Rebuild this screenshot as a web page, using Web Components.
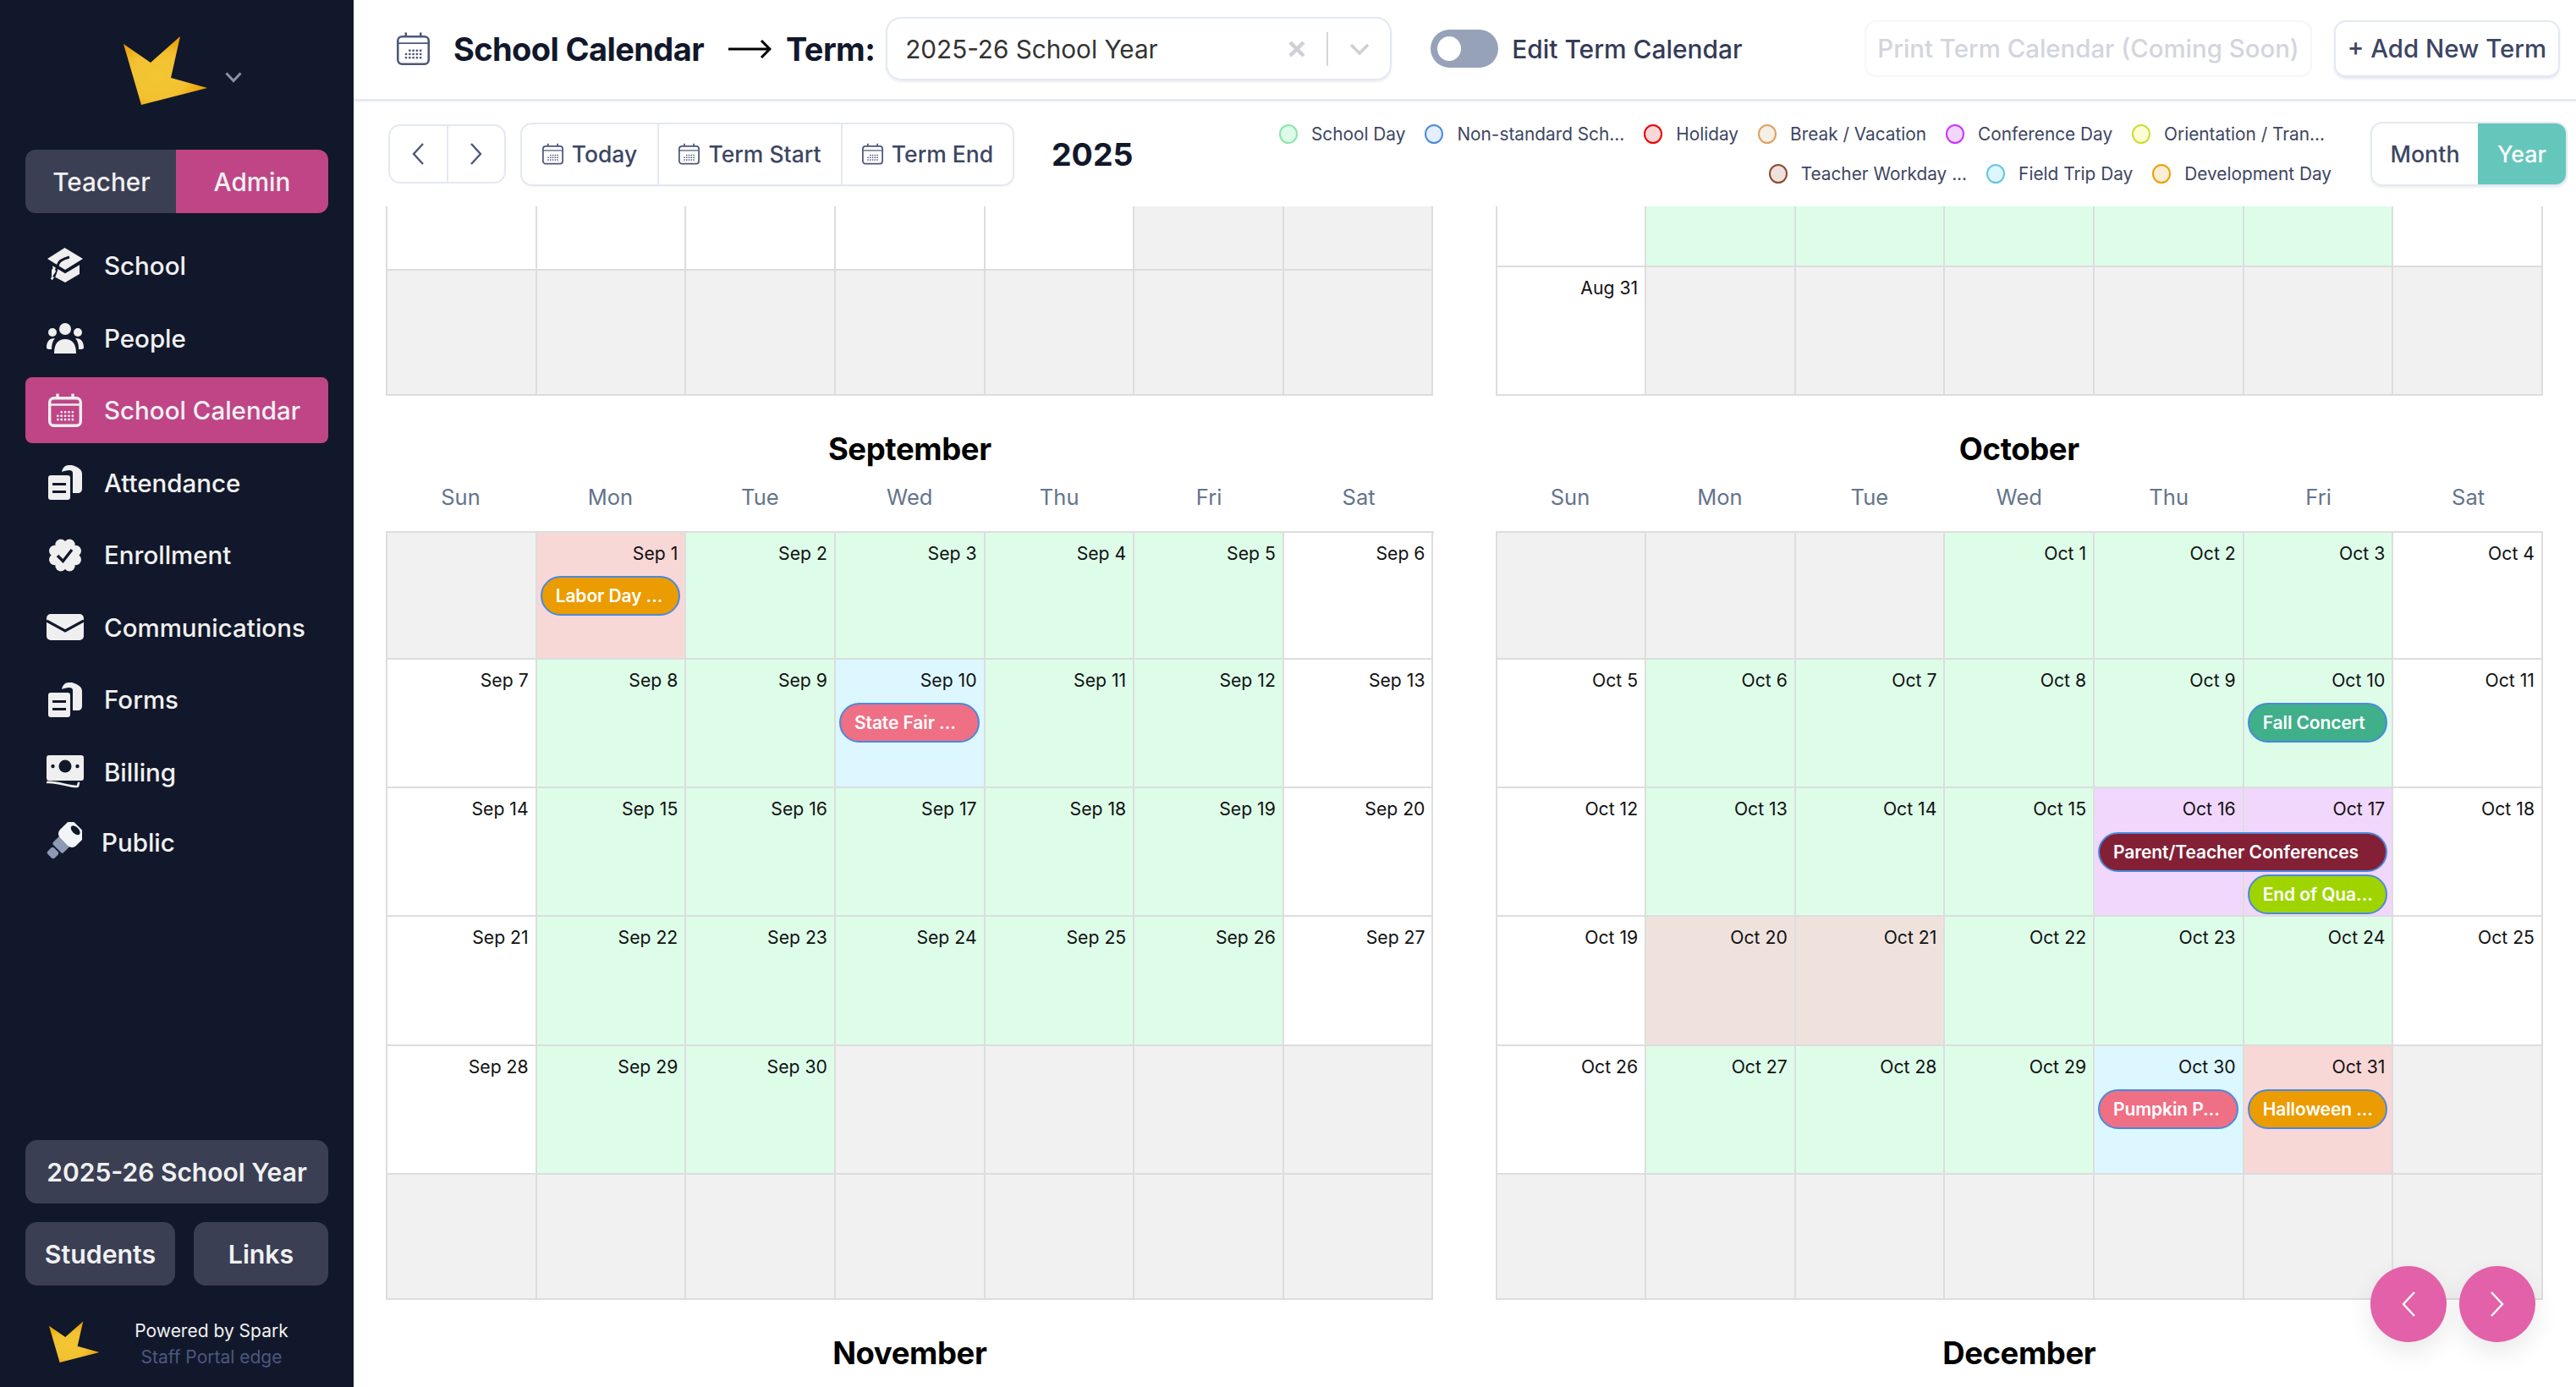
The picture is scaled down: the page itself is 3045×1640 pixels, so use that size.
<!DOCTYPE html>
<html lang="en"><head><meta charset="utf-8"><title>School Calendar</title>
<style>
html,body{margin:0;height:100%;overflow:hidden;background:#fff;font-family:Inter,"Liberation Sans",sans-serif}
</style></head><body>
<school-app></school-app>
<script>
const BG='#12182b';
const star=(id)=>`<svg viewBox="0 0 100 82" width="100%" height="100%" style="display:block"><defs><radialGradient id="${id}" cx="40%" cy="58%" r="62%"><stop offset="0" stop-color="#f3c633"/><stop offset=".55" stop-color="#f2c131"/><stop offset="1" stop-color="#ec9c00"/></radialGradient></defs><polygon points="0,9 32,31 67,0 56,49 99,61 21,81" fill="url(#${id})"/></svg>`;
const calIcon=(c,sw=3)=>{let d='';for(let y=0;y<3;y++)for(let x=0;x<5;x++){if(y==0&&x==0)continue;d+=`<rect x="${10+x*4.4}" y="${21+y*4.4}" width="2.6" height="2.6" rx=".8" fill="${c}"/>`}
 return `<svg viewBox="0 0 40 40" width="100%" height="100%" style="display:block"><rect x="${sw/2}" y="${4+sw/2}" width="${40-sw}" height="${36-sw}" rx="5" fill="none" stroke="${c}" stroke-width="${sw}"/><path d="M11 0.5V6M29 0.5V6" stroke="${c}" stroke-width="${sw}"/><path d="M2 13.5H38" stroke="${c}" stroke-width="${sw*.7}"/>${d}</svg>`};
const I='#efefef';
const scallop=()=>{let s='';for(let k=0;k<8;k++){const t=k*Math.PI/4+Math.PI/8;s+=`<circle cx="${(20+13.5*Math.cos(t)).toFixed(2)}" cy="${(20.5+13.5*Math.sin(t)).toFixed(2)}" r="6.500"/>`}return s};
const icons={
school:`<svg viewBox="0 0 44 42" width="44" height="42"><path fill="${I}" d="M21.5 0 43 13 22 26 1 13Z"/><path fill="${I}" d="M7 21 22 30 39 20V31L22 41 9 34Z"/><path fill="none" stroke="${BG}" stroke-width="3" d="M27 11C20 13 15 15 14 19 12 24 11 29 9 34"/><path fill="none" stroke="${BG}" stroke-width="2" d="M7 20 22 29 39 19"/><path fill="${I}" d="M6 26 9 23 11 28 7 34 9 35 7 38 5 37 6 34Z"/></svg>`,
people:`<svg viewBox="0 0 44 36" width="44" height="36"><g fill="${I}"><circle cx="22" cy="7" r="7"/><circle cx="7" cy="11" r="5"/><circle cx="37" cy="11" r="5"/><path d="M9 36C9 24 14 19 22 19S35 24 35 36C35 38 9 38 9 36Z"/><path d="M0 29C0 21 4 18 10 18 7 21 6 26 6 31 3 31 0 31 0 29Z"/><path d="M44 29C44 21 40 18 34 18 37 21 38 26 38 31 41 31 44 31 44 29Z"/></g></svg>`,
calendar:`<span style="display:block;width:40px;height:40px">${calIcon(I,3.4)}</span>`,
docs:`<svg viewBox="0 0 40 41" width="40" height="41"><g fill="${I}"><path d="M16 8C17 3 20 0 24 0H28C32 1 40 4 40 10V28C40 31 38 33 35 33H29V9C29 7 27 6 25 6 22 6 18 7 16 8Z"/><rect x="0" y="12" width="26" height="29" rx="3"/></g><path stroke="${BG}" stroke-width="3" d="M5 22.5H21M5 31.5H21"/></svg>`,
badge:`<svg viewBox="0 0 40 41" width="40" height="41"><g fill="${I}"><circle cx="20" cy="20.5" r="15"/>${scallop()}</g><path fill="none" stroke="${BG}" stroke-width="3.400" d="M11 21 17.500 27.500 28 14"/></svg>`,
mail:`<svg viewBox="0 0 44 31" width="44" height="31"><rect width="44" height="31" rx="5" fill="${I}"/><path fill="none" stroke="${BG}" stroke-width="3.200" d="M0 8 22 20 44 8"/></svg>`,
bill:`<svg viewBox="0 0 44 39" width="44" height="39"><rect width="44" height="30" rx="3" fill="${I}"/><circle cx="22" cy="13" r="7.500" fill="${BG}"/><circle cx="7.500" cy="13" r="2.200" fill="${BG}"/><circle cx="36.500" cy="13" r="2.200" fill="${BG}"/><path fill="none" stroke="${I}" stroke-width="2.600" stroke-linecap="round" d="M1 32C14 31 24 37 36 37 38 37 37 34 38 33"/></svg>`,
scope:`<svg viewBox="0 0 46 48" width="46" height="48"><g fill="#8e9ab3" transform="rotate(-45 23 24)"><rect x="-1" y="18" width="11" height="12" rx="3"/><rect x="12" y="15" width="14" height="18" rx="2"/></g><g transform="rotate(-45 23 24)"><rect x="24" y="10" width="26" height="28" rx="7" fill="#f2f5f5"/><ellipse cx="44" cy="24" rx="4" ry="7" fill="${BG}"/></g></svg>`};

class Base extends HTMLElement{connectedCallback(){if(this.shadowRoot)return;this.attachShadow({mode:'open'}).innerHTML=this.render()}
 a(n,d=''){return this.getAttribute(n)??d}}
const def=(n,c)=>customElements.define(n,c);

const C={g:'#f1f1f1',w:'#fff',s:'#ddfde9',h:'#f8d7d7',b:'#dcf7ff',c:'#f2d7fd',t:'#efe2dd'};
const O='#ea9c00',P='#ef6f85',M='#832035',L='#9fd400',T='#3fb08a';
const HS=[150,152,152,153,152,148];
const mk=(mon,start,n,marks={},ev={})=>{let d=1-start,rows=[];for(let r=0;r<6;r++){let cells=[];for(let i=0;i<7;i++,d++){if(d<1||d>n)cells.push(['g','']);else{let t=marks[d]||(i==0||i==6?'w':'s');cells.push([t,mon+' '+d])}}rows.push({cells,events:ev[r]||[],h:HS[r]})}return rows};
const blank=(arr)=>arr.split('').map(c=>[c,'']);
const DATA={
 sep:mk('Sep',1,30,{1:'h',10:'b'},{0:[[2,1,'Labor Day ...',O]],1:[[4,1,'State Fair ...',P]]}),
 oct:mk('Oct',3,31,{16:'c',17:'c',20:'t',21:'t',30:'b',31:'h'},{1:[[6,1,'Fall Concert',T]],2:[[5,2,'Parent/Teacher Conferences',M,52],[6,1,'End of Qua...',L,102]],4:[[5,1,'Pumpkin P...',P],[6,1,'Halloween ...',O]]}),
 t1:[{cells:blank('wwwwwgg'),h:76},{cells:blank('ggggggg'),h:148}],
 t2:[{cells:blank('wsssssw'),h:72},{cells:[['w','Aug 31'],...blank('gggggg')],h:152}]
};

def('nav-item',class extends Base{render(){const act=this.hasAttribute('active'),pub=this.a('icon')=='scope';return `<style>
:host{display:flex;align-items:center;height:78px;border-radius:8px;color:#f1f1f1;font-size:29.500px;font-weight:500;background:${act?'#bf4587':'transparent'};padding-left:${pub?23:25}px}
.i{width:44px;height:44px;display:flex;align-items:center;justify-content:center;margin-right:${pub?23:24}px;flex:none}
</style><span class="i">${icons[this.a('icon')]}</span><slot></slot>`}});

def('side-btn',class extends Base{render(){return `<style>
:host{display:flex;align-items:center;justify-content:center;height:75px;border-radius:14px;background:#3a3f54;color:#f1f1f1;font-size:30.300px;font-weight:600}
</style><slot></slot>`}});

def('app-sidebar',class extends Base{render(){return `<style>
:host{display:flex;flex-direction:column;width:418px;flex:none;height:100vh;background:${BG};padding:0 30px;box-sizing:border-box}
.lg{width:358px;display:flex;justify-content:flex-start;height:177px}
.seg{display:flex;height:75px;border-radius:12px;overflow:hidden;color:#f1f1f1;font-size:29.700px;font-weight:500}
.seg span{display:flex;align-items:center;justify-content:center}
.t{width:178px;background:#3a3f54;padding-left:2px;box-sizing:border-box}.d{flex:1;background:#bf4587}
nav{display:flex;flex-direction:column;gap:7.500px;margin-top:23px}
.foot{margin-top:auto;display:flex;flex-direction:column;gap:22px}
.two{display:flex;gap:22px}.two side-btn:first-child{width:177px}.two side-btn:last-child{flex:1}
.pw{display:flex;align-items:center;height:50px;margin-top:20px;margin-bottom:28px;padding-left:28px}
.pw .s{width:60px;height:50px;flex:none}
.tx{width:264px;text-align:center;line-height:31px;font-size:21px;color:#f1f1f1;position:relative;top:2px}
.tx div+div{color:#4c5780}
</style>
<div class="lg"><div style="position:relative;width:100%"><div style="width:100px;height:82px;margin:43px 0 0 116px">${star('a')}</div><svg style="position:absolute;left:236px;top:85px" width="20" height="13" viewBox="0 0 20 13"><path d="M1.500 1.500 10 10.500 18.500 1.500" fill="none" stroke="#8791aa" stroke-width="3"/></svg></div></div>
<div class="seg"><span class="t">Teacher</span><span class="d">Admin</span></div>
<nav><nav-item icon="school">School</nav-item><nav-item icon="people">People</nav-item><nav-item icon="calendar" active>School Calendar</nav-item><nav-item icon="docs">Attendance</nav-item><nav-item icon="badge">Enrollment</nav-item><nav-item icon="mail">Communications</nav-item><nav-item icon="docs">Forms</nav-item><nav-item icon="bill">Billing</nav-item><nav-item icon="scope" style="margin-top:-2px">Public</nav-item></nav>
<div class="foot"><side-btn style="font-size:30px">2025-26 School Year</side-btn><div class="two"><side-btn>Students</side-btn><side-btn>Links</side-btn></div>
<div class="pw"><span class="s">${star('b')}</span><div class="tx"><div>Powered by Spark</div><div>Staff Portal edge</div></div></div></div>`}});

def('top-bar',class extends Base{render(){const ch=`<svg width="24" height="14" viewBox="0 0 24 14"><path d="M2 2 12 12 22 2" fill="none" stroke="#cfd0d6" stroke-width="3.500"/></svg>`;return `<style>
:host{display:flex;align-items:center;border-bottom:3px solid #e4e8f2;padding:0 19px 2px 51px;box-sizing:content-box;flex:none;color:#12182b;height:115px}
h1{font-size:38px;font-weight:700;margin:0 0 0 28px;letter-spacing:-.6px;white-space:nowrap}
.ic{width:39px;height:39px;flex:none}
.arr{margin:0 17px 0 28px;flex:none}
.sel{display:flex;align-items:center;width:598px;height:75px;box-sizing:border-box;border:2px solid #e4e8f2;border-radius:18px;padding-left:21px;margin-left:13px;font-size:29.700px;color:#333;box-shadow:0 2px 3px rgba(30,40,80,.08)}
.sel .v{flex:1}
.x{color:#ccc;margin-right:25px;display:flex}.sep{width:2px;height:40px;background:#d6d6d6;margin-right:25px}
.tg{margin:0 16px 0 46px;width:80px;height:45px;border-radius:23px;background:#96a2b8;flex:none;position:relative}
.tg i{position:absolute;left:8px;top:8px;width:28px;height:29px;border-radius:50%;background:#fff}
.ed{font-size:29.900px;font-weight:500;color:#343b57;white-space:nowrap}
.pr{margin-left:auto;width:529px;height:67px;box-sizing:border-box;border:2px solid #f5f6f9;border-radius:14px;display:flex;align-items:center;justify-content:center;color:#d3d5dd;font-size:29.400px;font-weight:500;white-space:nowrap}
.ad{margin-left:26px;width:267px;height:68px;box-sizing:border-box;border:2px solid #e4e8f2;border-bottom-width:3px;border-radius:14px;display:flex;align-items:center;justify-content:center;color:#3d4663;font-size:29.400px;font-weight:500;white-space:nowrap;box-shadow:0 2px 3px rgba(30,40,80,.08)}
</style><span class="ic">${calIcon('#4d5878',2.6)}</span><h1>School Calendar</h1>
<svg class="arr" width="52" height="24" viewBox="0 0 52 24"><path d="M1 12H50M40 2 50 12 40 22" fill="none" stroke="#000" stroke-width="3"/></svg><h1 style="margin:0">Term:</h1>
<div class="sel"><span class="v">2025-26 School Year</span><span class="x"><svg width="20" height="20" viewBox="0 0 20 20"><path d="M2 2 18 18M18 2 2 18" stroke="#cfd0d6" stroke-width="4.500"/></svg></span><span class="sep"></span>${ch}<span style="width:24px"></span></div>
<span class="tg"><i></i></span><span class="ed">Edit Term Calendar</span>
<span class="pr">Print Term Calendar (Coming Soon)</span><span class="ad">+ Add New Term</span>`}});

def('legend-item',class extends Base{render(){return `<style>
:host{display:inline-flex;align-items:center;font-size:20.800px;color:#3d4663;white-space:nowrap}
i{width:22px;height:23px;box-sizing:border-box;border-radius:50%;border:2.500px solid ${this.a('b')};background:${this.a('f')};margin-right:16px;flex:none}
</style><i></i><slot></slot>`}});

def('cal-toolbar',class extends Base{render(){const chev=d=>`<svg width="16" height="28" viewBox="0 0 16 28"><path d="${d}" fill="none" stroke="#4d5878" stroke-width="2.400"/></svg>`;
const b=(t,w)=>`<span class="b" style="width:${w}px"><span class="k">${calIcon('#4d5878',2.8)}</span>${t}</span>`;return `<style>
:host{display:flex;align-items:center;height:124px;padding:0 10px 0 41px;flex:none;position:relative}
.nav{display:flex;width:139px;height:70px;box-sizing:border-box;border:2px solid #e4e8f2;border-radius:14px;flex:none}
.nav span{flex:1;display:flex;align-items:center;justify-content:center}.nav span+span{border-left:2px solid #e4e8f2}
.grp{display:flex;height:75px;box-sizing:border-box;border:2px solid #e4e8f2;border-radius:14px;margin-left:17px;flex:none;box-shadow:0 1px 2px rgba(30,40,80,.06)}
.b{display:flex;align-items:center;justify-content:center;font-size:26.500px;font-weight:500;color:#3d4663;box-sizing:border-box}
.b+.b{border-left:2px solid #e4e8f2}
.k{width:25px;height:26px;margin-right:10px}
.y{font-size:37.500px;font-weight:700;color:#12182b;margin-left:44px}
.lg{margin-left:auto;display:flex;flex-direction:column;gap:23px;align-items:flex-end;margin-top:0}
.r{display:flex;gap:23px;height:24px;align-items:center}.r1{margin-right:8px}
.mt{display:flex;width:233px;height:76px;box-sizing:border-box;border:2px solid #e4e8f2;border-radius:14px;overflow:hidden;margin-left:46px;flex:none;font-size:26.800px;font-weight:500;box-shadow:0 2px 3px rgba(30,40,80,.08)}
.mt span{display:flex;align-items:center;justify-content:center}
.m{width:125px;color:#3d4663}.yr{flex:1;background:#65c6bb;color:#fff}
</style><span class="nav"><span>${chev('M14 2 3 14 14 26')}</span><span>${chev('M2 2 13 14 2 26')}</span></span>
<span class="grp">${b('Today',160)}${b('Term Start',217)}${b('Term End',203)}</span><span class="y">2025</span>
<div class="lg"><div class="r r1">
<legend-item b="#8be4a8" f="#dcfce9">School Day</legend-item><legend-item b="#4a8bdc" f="#e3effa">Non-standard Sch...</legend-item><legend-item b="#ee0000" f="#f8d7d7">Holiday</legend-item><legend-item b="#e0a060" f="#f5efe6">Break / Vacation</legend-item><legend-item b="#cc33ff" f="#f2d7fd">Conference Day</legend-item><legend-item b="#ccdd33" f="#fdfdd5">Orientation / Tran...</legend-item></div>
<div class="r"><legend-item b="#8c4a30" f="#efe2dd">Teacher Workday ...</legend-item><legend-item b="#66c5e0" f="#dcf7ff">Field Trip Day</legend-item><legend-item b="#ee9f00" f="#fbeed5">Development Day</legend-item></div></div>
<span class="mt"><span class="m">Month</span><span class="yr">Year</span></span>`}});

/* one week row: cells are [type,label]; events are [startCol,span,text,colour,top] */
def('cal-week',class extends Base{render(){const spec=this.spec,h=spec.h||151;
let out=spec.cells.map((c,i)=>`<div class="c" style="grid-column:${i+1};background:${C[c[0]]}">${c[1]?`<span>${c[1]}</span>`:''}</div>`).join('');
out+=(spec.events||[]).map(e=>`<div class="e" style="grid-column:${e[0]}/span ${e[1]};background:${e[3]};margin-top:${e[4]||51}px">${e[2]}</div>`).join('');
return `<style>
:host{display:grid;grid-template-columns:repeat(7,minmax(0,1fr));grid-template-rows:${h}px;border-left:2px solid #ddd}
.c{grid-row:1;border-right:2px solid #ddd;border-bottom:2px solid #ddd;box-sizing:border-box;text-align:right;padding:11px 8px 0 0;font-size:21.200px;line-height:26px;color:#111;min-width:0}
.e{grid-row:1;align-self:start;margin-left:4px;margin-right:7px;height:47px;box-sizing:border-box;border:2px solid #4a89dc;border-radius:24px;color:#fff;font-size:21px;font-weight:600;line-height:43px;padding-left:16px;white-space:nowrap;overflow:hidden;z-index:1;letter-spacing:-.1px}
</style>${out}`}});

const addWeeks=(host,rows)=>{for(const r of rows){const w=document.createElement('cal-week');w.spec=r;host.appendChild(w)}};

def('cal-month',class extends Base{render(){return `<style>
:host{display:block;min-width:0}
h2{margin:43px 0 19px;height:40px;line-height:40px;text-align:center;font-size:36.500px;font-weight:700;color:#000;letter-spacing:-.4px}
.w{display:grid;grid-template-columns:repeat(7,1fr);height:36px;line-height:36px;text-align:center;color:#64748b;font-size:25.500px;font-weight:400;margin-bottom:22px}
.g{border-top:2px solid #ddd}
</style><h2>${this.a('name')}</h2>${this.hasAttribute('data')?`<div class="w">${['Sun','Mon','Tue','Wed','Thu','Fri','Sat'].map(x=>`<span>${x}</span>`).join('')}</div><div class="g"></div>`:''}`}
connectedCallback(){super.connectedCallback();const g=this.shadowRoot.querySelector('.g');if(g&&!g.firstChild)addWeeks(g,DATA[this.a('data')])}});

def('cal-tail',class extends Base{render(){return `<style>:host{display:block}</style>`}
connectedCallback(){const fresh=!this.shadowRoot;super.connectedCallback();if(fresh)addWeeks(this.shadowRoot,DATA[this.a('data')])}});

def('round-fab',class extends Base{render(){return `<style>
:host{display:flex;width:90px;height:90px;border-radius:50%;background:#e261a8;align-items:center;justify-content:center;box-shadow:0 12px 30px rgba(0,0,0,.09)}
</style><svg width="18" height="32" viewBox="0 0 18 32"><path d="${this.a('d')}" fill="none" stroke="#fff" stroke-width="2.400"/></svg>`}});

def('school-app',class extends Base{render(){return `<style>
:host{display:flex;height:100vh;overflow:hidden}
main{flex:1;min-width:0;display:flex;flex-direction:column;height:100vh;overflow:hidden;position:relative}
.sc{flex:1;min-height:0;overflow:hidden;padding:0 39px 0 38px;display:grid;grid-template-columns:minmax(0,1fr) minmax(0,1fr);column-gap:73px;align-content:start}
.f{position:absolute;right:48px;bottom:53px;display:flex;gap:15px}
</style><app-sidebar></app-sidebar><main><top-bar></top-bar><cal-toolbar></cal-toolbar>
<div class="sc"><cal-tail data="t1"></cal-tail><cal-tail data="t2"></cal-tail><cal-month data="sep" name="September"></cal-month><cal-month data="oct" name="October"></cal-month><cal-month name="November"></cal-month><cal-month name="December"></cal-month></div>
<div class="f"><round-fab d="M16 2 3 16 16 30"></round-fab><round-fab d="M2 2 15 16 2 30"></round-fab></div></main>`}});
</script></body></html>
